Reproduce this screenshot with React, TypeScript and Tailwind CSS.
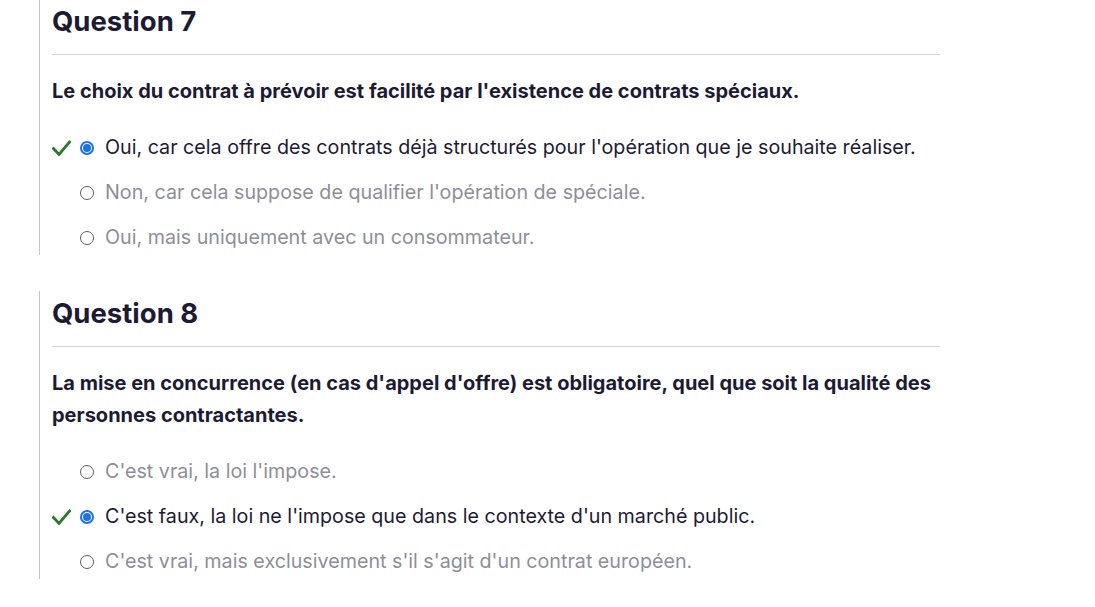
const questions = [
  {
    title: "Question 7",
    text: "Le choix du contrat à prévoir est facilité par l'existence de contrats spéciaux.",
    answers: [
      { label: "Oui, car cela offre des contrats déjà structurés pour l'opération que je souhaite réaliser.", correct: true },
      { label: "Non, car cela suppose de qualifier l'opération de spéciale.", correct: false },
      { label: "Oui, mais uniquement avec un consommateur.", correct: false },
    ],
  },
  {
    title: "Question 8",
    text: "La mise en concurrence (en cas d'appel d'offre) est obligatoire, quel que soit la qualité des personnes contractantes.",
    answers: [
      { label: "C'est vrai, la loi l'impose.", correct: false },
      { label: "C'est faux, la loi ne l'impose que dans le contexte d'un marché public.", correct: true },
      { label: "C'est vrai, mais exclusivement s'il s'agit d'un contrat européen.", correct: false },
    ],
  },
]

function Check() {
  return (
    <svg width="19" height="19" viewBox="0 0 19 19" fill="none">
      <path d="M1.5 9.5 L7 15.5 L17.5 3" stroke="#2b7a2b" strokeWidth="2.8" strokeLinecap="square" />
    </svg>
  )
}

function Radio({ on }: { on: boolean }) {
  if (on) {
    return (
      <span className="w-[14px] h-[14px] rounded-full border-[2px] border-[#1a73e8] flex items-center justify-center">
        <span className="w-[8px] h-[8px] rounded-full bg-[#1a73e8]" />
      </span>
    )
  }
  return <span className="w-[14px] h-[14px] rounded-full border-[1.5px] border-[#5f5f6a]" />
}

export default function App() {
  return (
    <div
      className="bg-white w-[1095px] h-[607px] overflow-hidden pl-[39px]"
      style={{ fontFamily: "Inter, 'Noto Sans', sans-serif" }}
    >
      <div className="-mt-[1px] w-[901px] flex flex-col gap-[36px]">
        {questions.map((q) => (
          <section key={q.title} className="border-l border-[#c4c4c4] pl-3">
            {/* Titre */}
            <h2 className="pt-[2px] text-[27.5px] leading-[40px] font-bold text-[#1d1a35] pb-[13px] border-b border-[#d4d4d4]">
              {q.title}
            </h2>

            <p className="mt-[20px] text-[20px] leading-[32px] font-bold text-[#1d1a35]">
              {q.text}
            </p>

            {/* Réponses */}
            <div className="mt-[24px] flex flex-col gap-[11px]">
              {q.answers.map((a) => (
                <div key={a.label} className="flex items-center h-[34px]">
                  <span className="w-[28px] flex items-center">{a.correct && <Check />}</span>
                  <Radio on={a.correct} />
                  <span
                    className={
                      a.correct
                        ? "ml-[11px] text-[19.7px] text-[#1d1a35]"
                        : "ml-[11px] text-[19.7px] text-[#8e8e99]"
                    }
                  >
                    {a.label}
                  </span>
                </div>
              ))}
            </div>
          </section>
        ))}
      </div>
    </div>
  )
}
